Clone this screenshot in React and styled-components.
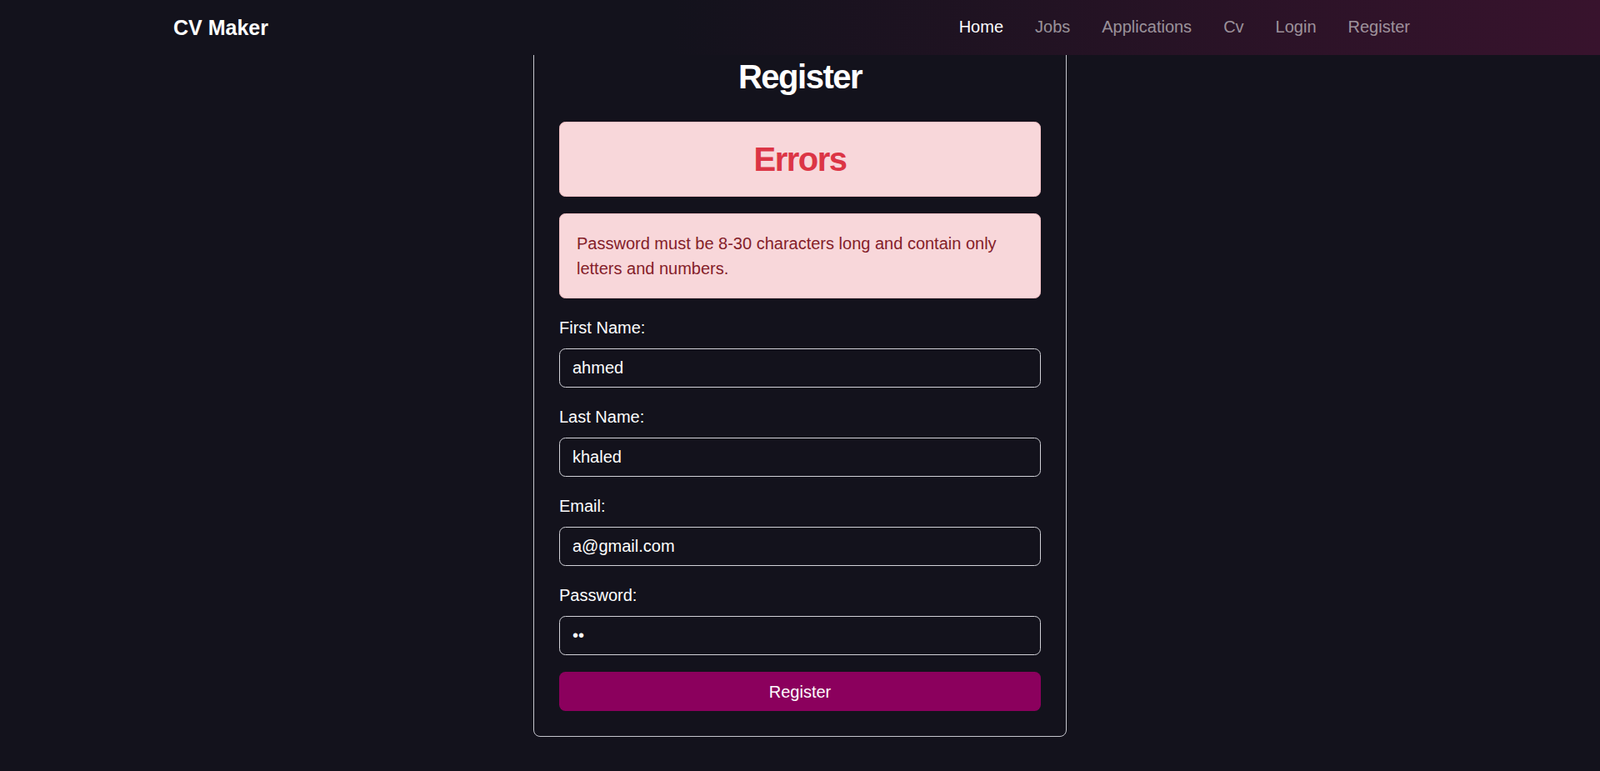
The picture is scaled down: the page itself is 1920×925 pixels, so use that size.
import React from 'react';
import styled, { createGlobalStyle } from 'styled-components';

const GlobalStyle = createGlobalStyle`
  * {
    box-sizing: border-box;
  }

  body {
    margin: 0;
    background: #13121c;
    color: #ffffff;
    font-family: 'Liberation Sans', Arial, sans-serif;
    font-size: 20px;
    line-height: 30px;
  }
`;

// Top bar, pinned over the page content
const Navbar = styled.nav`
  position: fixed;
  top: 0;
  left: 0;
  right: 0;
  height: 66px;
  z-index: 10;
  background: linear-gradient(90deg, #13121c 0%, #13121c 42%, #38132d 100%);
`;

const NavContainer = styled.div`
  max-width: 1536px;
  height: 100%;
  margin: 0 auto;
  padding: 0 16px;
  display: flex;
  align-items: center;
  justify-content: space-between;
`;

const Brand = styled.a`
  font-size: 25px;
  font-weight: 700;
  color: #ffffff;
  text-decoration: none;
  line-height: 1;
`;

const NavLinks = styled.ul`
  display: flex;
  align-items: center;
  list-style: none;
  margin: 0;
  padding: 0 1px 0 0;
`;

const NavLink = styled.a`
  display: block;
  padding: 0 19px;
  font-size: 20px;
  color: ${props => (props.active ? '#ffffff' : 'rgba(255, 255, 255, 0.55)')};
  text-decoration: none;
  line-height: 30px;
  margin-top: -2px;
`;

const Main = styled.main`
  display: flex;
  justify-content: center;
  padding-top: 37px;
  min-height: 100vh;
`;

const Card = styled.div`
  width: 640px;
  align-self: flex-start;
  border: 1px solid #c6c6ce;
  border-radius: 8px;
  padding: 30px;
  background: #13121c;
`;

const Title = styled.h2`
  margin: 0 0 30px;
  font-size: 40px;
  line-height: 48px;
  font-weight: 700;
  letter-spacing: -1.5px;
  text-align: center;
  color: #ffffff;
`;

const Alert = styled.div`
  background: #f8d7da;
  border: 1px solid #f5c2c7;
  border-radius: 7.5px;
  padding: 20px;
  margin-bottom: 20px;
  color: #842029;
  font-size: 20px;
  line-height: 30px;
`;

const AlertHeading = styled.h2`
  margin: 0;
  font-size: 40px;
  line-height: 48px;
  font-weight: 700;
  letter-spacing: -1.5px;
  text-align: center;
  color: #dc3545;
`;

const FormGroup = styled.div`
  margin-bottom: 20px;
`;

const Label = styled.label`
  display: block;
  margin-bottom: 10px;
  font-size: 20px;
  line-height: 30px;
  color: #ffffff;
`;

const Input = styled.input`
  display: block;
  width: 100%;
  height: 47px;
  padding: 7.5px 15px;
  font-family: inherit;
  font-size: 20px;
  line-height: 30px;
  color: #ffffff;
  background: transparent;
  border: 1px solid #d2d2d8;
  border-radius: 7.5px;
  outline: none;
`;

const SubmitButton = styled.button`
  display: block;
  width: 100%;
  height: 47px;
  border: none;
  border-radius: 7.5px;
  background: #8b005d;
  color: #ffffff;
  font-family: inherit;
  font-size: 20px;
  line-height: 30px;
  cursor: pointer;
`;

const links = ['Home', 'Jobs', 'Applications', 'Cv', 'Login', 'Register'];

const fields = [
  { label: 'First Name:', type: 'text', value: 'ahmed' },
  { label: 'Last Name:', type: 'text', value: 'khaled' },
  { label: 'Email:', type: 'email', value: 'a@gmail.com' },
  { label: 'Password:', type: 'password', value: '12' }
];

const App = () => {
  return (
    <>
      <GlobalStyle />
      <Navbar>
        <NavContainer>
          <Brand href="#">CV Maker</Brand>
          <NavLinks>
            {links.map((link, i) => (
              <li key={link}>
                <NavLink href="#" active={i === 0 ? 1 : 0}>{link}</NavLink>
              </li>
            ))}
          </NavLinks>
        </NavContainer>
      </Navbar>

      <Main>
        <Card>
          <Title>Register</Title>
          <Alert>
            <AlertHeading>Errors</AlertHeading>
          </Alert>
          <Alert>
            Password must be 8-30 characters long and contain only letters and numbers.
          </Alert>
          <form onSubmit={e => e.preventDefault()}>
            {fields.map(field => (
              <FormGroup key={field.label}>
                <Label>{field.label}</Label>
                <Input type={field.type} defaultValue={field.value} />
              </FormGroup>
            ))}
            <SubmitButton type="submit">Register</SubmitButton>
          </form>
        </Card>
      </Main>
    </>
  );
};

export default App;
